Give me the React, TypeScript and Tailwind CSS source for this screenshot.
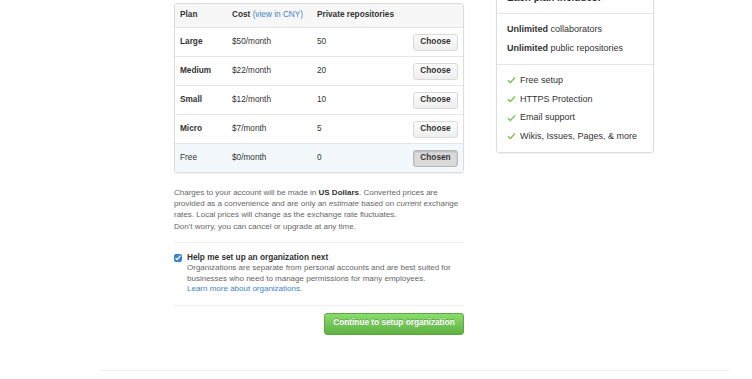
import React from "react";

const plans = [
    { name: "Large", cost: "$50/month", repos: "50" },
    { name: "Medium", cost: "$22/month", repos: "20" },
    { name: "Small", cost: "$12/month", repos: "10" },
    { name: "Micro", cost: "$7/month", repos: "5" },
    { name: "Free", cost: "$0/month", repos: "0", chosen: true },
];

const features = ["Free setup", "HTTPS Protection", "Email support", "Wikis, Issues, Pages, & more"];

function CheckMark() {
    return (
        <svg width="9" height="8" viewBox="0 0 9 8" className="shrink-0">
            <path d="M1 4.3 L3.4 6.6 L8 1.4" fill="none" stroke="#6cc644" strokeWidth="1.4" />
        </svg>
    );
}

function PlanTable() {
    return (
        <div className="border border-[#dcdcdc] rounded-[3px] shadow-[0_1px_2px_rgba(0,0,0,0.06)] overflow-hidden text-[8.25px] text-[#333]">
            {/* Header */}
            <div className="grid grid-cols-[52px_85px_1fr] items-center h-[23px] bg-[#f7f7f7] pl-[5px] font-bold">
                <div>Plan</div>
                <div>
                    Cost <span className="font-normal text-[#4183c4]">(view in CNY)</span>
                </div>
                <div>Private repositories</div>
            </div>

            {/* Rows */}
            {plans.map((p) => (
                <div
                    key={p.name}
                    className={`grid grid-cols-[52px_85px_1fr_auto] items-center h-[29px] pl-[5px] pr-[5px] border-t border-[#e5e5e5] ${
                        p.chosen ? "bg-[#f2f8fb]" : "bg-white"
                    }`}
                >
                    <div className={p.chosen ? "" : "font-bold"}>{p.name}</div>
                    <div>{p.cost}</div>
                    <div>{p.repos}</div>
                    <button
                        className={`w-[45px] h-[17px] rounded-[3px] border text-[8.25px] font-bold leading-none ${
                            p.chosen
                                ? "bg-[#dadada] border-[#b8b8b8] shadow-[inset_0_1px_2px_rgba(0,0,0,0.15)] text-[#333]"
                                : "bg-gradient-to-b from-[#fcfcfc] to-[#eeeeee] border-[#d9d9d9] text-[#333]"
                        }`}
                    >
                        {p.chosen ? "Chosen" : "Choose"}
                    </button>
                </div>
            ))}
        </div>
    );
}

export default function App() {
    return (
        <div className="h-[379px] overflow-hidden bg-white font-['Liberation_Sans',Arial,sans-serif] text-[#333]">
            <div className="ml-[100px] w-[630px]">
                <div className="flex gap-[32px] pl-[74px] pt-[3px]">
                    {/* Main column */}
                    <div className="w-[290px]">
                        <PlanTable />

                        <div className="mt-[14px] text-[8px] leading-[11px] text-[#666] pr-[4px]">
                            <p>
                                Charges to your account will be made in{" "}
                                <strong className="text-[#333]">US Dollars</strong>. Converted prices are provided
                                as a convenience and are only an <em>estimate</em> based on <em>current</em>{" "}
                                exchange rates. Local prices will change as the exchange rate fluctuates.
                            </p>
                            <p className="mt-[1px]">Don't worry, you can cancel or upgrade at any time.</p>
                        </div>

                        <div className="mt-[10px] border-t border-[#efeded] pt-[9px] pb-[10px] flex gap-[5px]">
                            <input
                                type="checkbox"
                                defaultChecked
                                className="w-[8px] h-[8px] mt-[2px] accent-[#3f7fd4] shrink-0"
                            />
                            <div>
                                <div className="text-[8.25px] leading-[11px] font-bold text-[#333]">
                                    Help me set up an organization next
                                </div>
                                <p className="text-[8px] leading-[10.5px] text-[#666]">
                                    Organizations are separate from personal accounts and are best suited for
                                    businesses who need to manage permissions for many employees.
                                    <br />
                                    <span className="text-[#4183c4]">Learn more about organizations.</span>
                                </p>
                            </div>
                        </div>

                        <div className="border-t border-[#efeded] pt-[7px] flex justify-end">
                            <button className="w-[140px] h-[22px] rounded-[3px] border border-[#5ca941] bg-gradient-to-b from-[#8add6d] to-[#60b044] text-white text-[8.25px] font-bold [text-shadow:0_-1px_0_rgba(0,0,0,0.25)]">
                                Continue to setup organization
                            </button>
                        </div>
                    </div>

                    {/* Sidebar */}
                    <div className="w-[158px] -mt-[23px] self-start border border-[#dddddd] rounded-[3px] shadow-[0_1px_2px_rgba(0,0,0,0.06)] text-[9px]">
                        <div className="h-[33px] flex items-center px-[10px] border-b border-[#e5e5e5] font-bold text-[10px]">
                            Each plan includes:
                        </div>
                        <div className="px-[10px] pt-[6px] pb-[6px] border-b border-[#e5e5e5] leading-[19px]">
                            <div>
                                <strong>Unlimited</strong> collaborators
                            </div>
                            <div>
                                <strong>Unlimited</strong> public repositories
                            </div>
                        </div>
                        <div className="px-[10px] pt-[6px] pb-[6px] leading-[18.7px]">
                            {features.map((f) => (
                                <div key={f} className="flex items-center gap-[4px]">
                                    <CheckMark />
                                    <span>{f}</span>
                                </div>
                            ))}
                        </div>
                    </div>
                </div>

                <div className="mt-[35px] border-t border-[#eeeeee]" />
            </div>
        </div>
    );
}
